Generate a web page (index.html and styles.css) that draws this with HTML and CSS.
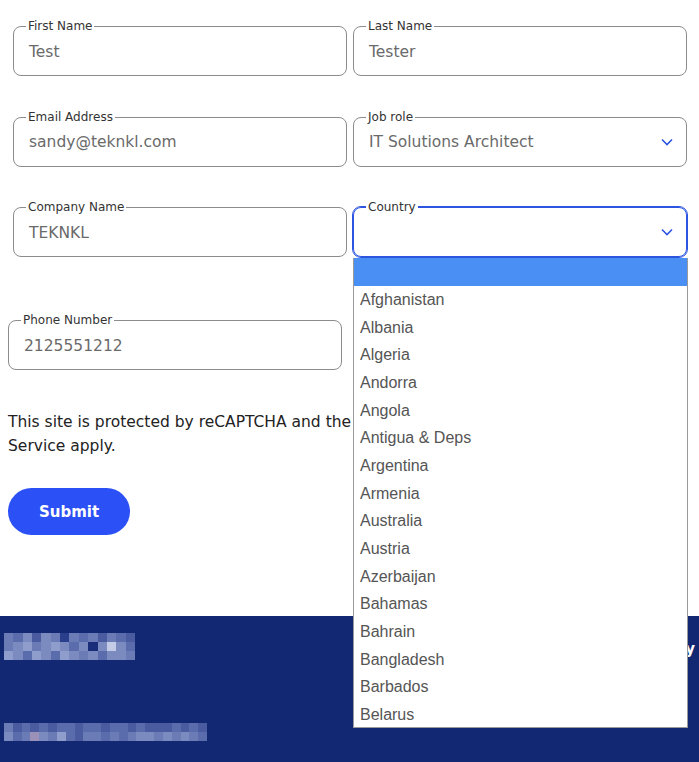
FILE: index.html
```html
<!DOCTYPE html>
<html>
<head>
<meta charset="utf-8">
<link rel="stylesheet" href="styles.css">
</head>
<body>
<main class="page">
  <div class="grid">
    <div class="field"><label>First Name</label><span class="value">Test</span></div>
    <div class="field"><label>Last Name</label><span class="value">Tester</span></div>
    <div class="field"><label>Email Address</label><span class="value">sandy@teknkl.com</span></div>
    <div class="field select"><label>Job role</label><span class="value">IT Solutions Architect</span>
      <svg class="chev" width="12" height="8" viewBox="0 0 12 8"><path d="M1 1.5l5 5 5-5" fill="none" stroke="#2d55e0" stroke-width="1.6"/></svg>
    </div>
    <div class="field"><label>Company Name</label><span class="value">TEKNKL</span></div>
    <div class="field select focused"><label>Country</label><span class="value"></span>
      <svg class="chev" width="12" height="8" viewBox="0 0 12 8"><path d="M1 1.5l5 5 5-5" fill="none" stroke="#2d55e0" stroke-width="1.6"/></svg>
      <ul class="dropdown">
        <li class="active"></li>
        <li>Afghanistan</li>
        <li>Albania</li>
        <li>Algeria</li>
        <li>Andorra</li>
        <li>Angola</li>
        <li>Antigua &amp; Deps</li>
        <li>Argentina</li>
        <li>Armenia</li>
        <li>Australia</li>
        <li>Austria</li>
        <li>Azerbaijan</li>
        <li>Bahamas</li>
        <li>Bahrain</li>
        <li>Bangladesh</li>
        <li>Barbados</li>
        <li>Belarus</li>
      </ul>
    </div>
  </div>
  <div class="field phone"><label>Phone Number</label><span class="value">2125551212</span></div>
  <p class="legal">This site is protected by reCAPTCHA and the Google Privacy Policy and Terms of Service apply.</p>
  <button class="submit">Submit</button>
</main>
<footer class="footer">
  <div class="mosaic top">
    <i class="m3"></i><i class="m2"></i><i class="m4"></i><i class="m1"></i><i class="m4"></i><i class="m3"></i><i class="m0"></i><i class="m3"></i><i class="m2"></i><i class="m3"></i><i class="m1"></i><i class="m3"></i><i class="m2"></i><i class="m1"></i>
    <i class="m3"></i><i class="m4"></i><i class="m5"></i><i class="m3"></i><i class="m4"></i><i class="m5"></i><i class="m4"></i><i class="m2"></i><i class="m4"></i><i class="n0"></i><i class="m4"></i><i class="m6"></i><i class="m4"></i><i class="m2"></i>
    <i class="m5"></i><i class="m4"></i><i class="m2"></i><i class="m5"></i><i class="m4"></i><i class="m2"></i><i class="m5"></i><i class="m4"></i><i class="m3"></i><i class="m4"></i><i class="m2"></i><i class="m4"></i><i class="m4"></i><i class="m3"></i>
  </div>
  <div class="footer-link">Privacy Policy</div>
  <div class="mosaic bottom">
    <i class="m3"></i><i class="m1"></i><i class="m2"></i><i class="m1"></i><i class="m2"></i><i class="m1"></i><i class="m2"></i><i class="m2"></i><i class="m1"></i><i class="m2"></i><i class="m2"></i><i class="m1"></i><i class="m2"></i><i class="m2"></i><i class="m1"></i><i class="m2"></i><i class="m1"></i><i class="m1"></i><i class="m1"></i><i class="m2"></i><i class="m1"></i><i class="m2"></i><i class="m1"></i>
    <i class="m4"></i><i class="m2"></i><i class="m3"></i><i class="m7"></i><i class="m4"></i><i class="m3"></i><i class="m5"></i><i class="m2"></i><i class="m1"></i><i class="m3"></i><i class="m3"></i><i class="m2"></i><i class="m3"></i><i class="m2"></i><i class="m3"></i><i class="m4"></i><i class="m4"></i><i class="m3"></i><i class="m4"></i><i class="m3"></i><i class="m4"></i><i class="m3"></i><i class="m2"></i>
  </div>
</footer>
</body>
</html>
```
FILE: styles.css
```css
html, body {
  margin: 0;
  padding: 0;
  background: #fff;
}
body {
  font-family: "DejaVu Sans", "Noto Sans", sans-serif;
  color: #222;
  overflow: hidden;
  height: 762px;
}
.page {
  padding: 26px 12px 0 8px;
  height: 616px;
  box-sizing: border-box;
}
.grid {
  display: grid;
  grid-template-columns: 334px 334px;
  column-gap: 6px;
  row-gap: 40.5px;
  margin-left: 5px;
}
.field {
  position: relative;
  height: 50px;
  box-sizing: border-box;
  border: 1px solid #8c8c8c;
  border-radius: 8px;
  display: flex;
  align-items: center;
  padding: 0 15px;
}
.field label {
  position: absolute;
  top: -9px;
  left: 12px;
  padding: 0 2px;
  background: #fff;
  font-size: 12px;
  line-height: 16px;
  color: #333;
}
.value {
  font-size: 15.5px;
  color: #6a6a6a;
  flex: 1;
  padding-top: 1px;
}
.select .chev {
  margin-right: -2px;
}
.focused {
  border-color: #2d55e0;
  outline: 1px solid #2d55e0;
}
.dropdown {
  position: absolute;
  top: 50px;
  left: -1px;
  width: 335px;
  height: 470px;
  box-sizing: border-box;
  margin: 0;
  padding: 0;
  list-style: none;
  background: #fff;
  border: 1px solid #9a9a9a;
  border-top: none;
  z-index: 5;
  font-family: "Liberation Sans", Arial, sans-serif;
  font-size: 16px;
  color: #555;
}
.dropdown li {
  height: 27.67px;
  line-height: 27.67px;
  padding-left: 6px;
}
.dropdown li.active {
  height: 28px;
  background: #4a8ff4;
}
.phone {
  width: 334px;
  margin-top: 63px;
}
.legal {
  margin: 40px 0 0;
  font-size: 15.5px;
  line-height: 24px;
  color: #222;
}
.submit {
  margin-top: 30px;
  width: 122px;
  height: 47px;
  border: none;
  border-radius: 24px;
  background: #2b50f5;
  color: #fff;
  font-family: "DejaVu Sans", sans-serif;
  font-weight: bold;
  font-size: 15px;
}
.footer {
  position: relative;
  height: 146px;
  background: #132873;
  padding: 17px 0 0 4px;
  box-sizing: border-box;
}
.mosaic {
  display: grid;
  grid-auto-rows: 9px;
}
.mosaic.top {
  width: 131px;
  grid-template-columns: repeat(14, 1fr);
}
.mosaic.bottom {
  width: 203px;
  grid-template-columns: repeat(23, 1fr);
  margin-top: 63px;
}
.footer-link {
  position: absolute;
  right: 4px;
  top: 24px;
  color: #fff;
  font-weight: bold;
  font-size: 15px;
}
.m0 { background: #2a3f8c; }
.n0 { background: #1a2d78; }
.m1 { background: #4a5c9f; }
.m2 { background: #5a6cab; }
.m3 { background: #6a7bb5; }
.m4 { background: #7b8bc0; }
.m5 { background: #8e9dcb; }
.m6 { background: #c3cbe6; }
.m7 { background: #9a90b8; }
```
